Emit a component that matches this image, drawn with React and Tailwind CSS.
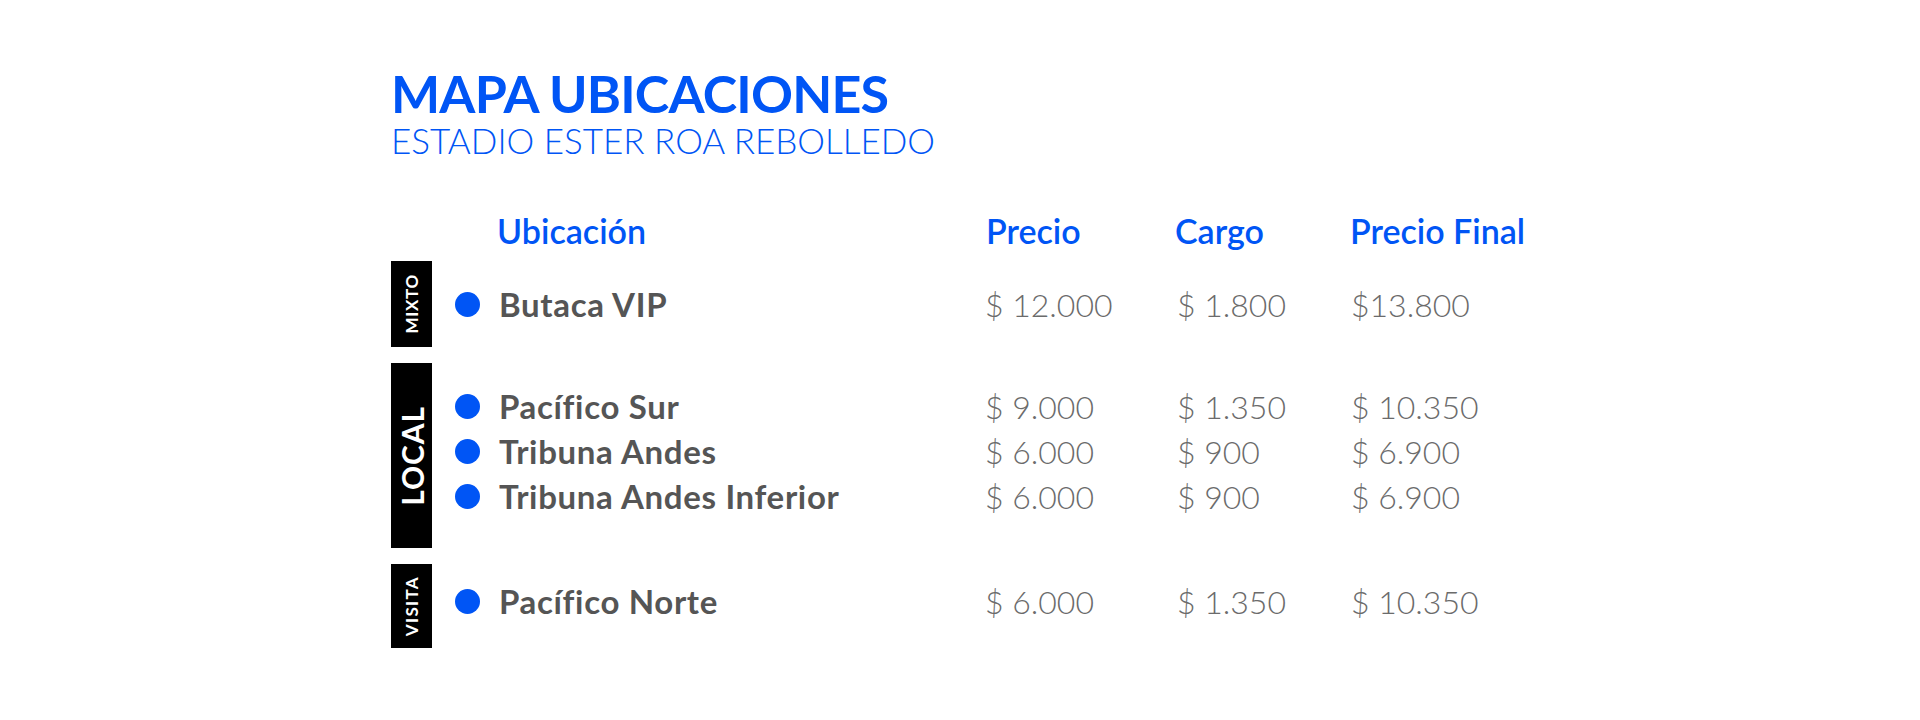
import React from 'react';

const groups = [
  {
    label: 'MIXTO',
    labelClass: 'text-[17px] tracking-[0.04em]',
    boxClass: 'h-[86px]',
    rowsClass: '',
    rows: [{ name: 'Butaca VIP', precio: '$ 12.000', cargo: '$ 1.800', total: '$13.800' }],
  },
  {
    label: 'LOCAL',
    labelClass: 'text-[30px] tracking-[0.03em]',
    boxClass: 'h-[185px]',
    rowsClass: 'mb-[8px]',
    rows: [
      { name: 'Pacífico Sur', precio: '$ 9.000', cargo: '$ 1.350', total: '$ 10.350' },
      { name: 'Tribuna Andes', precio: '$ 6.000', cargo: '$ 900', total: '$ 6.900' },
      { name: 'Tribuna Andes Inferior', precio: '$ 6.000', cargo: '$ 900', total: '$ 6.900' },
    ],
  },
  {
    label: 'VISITA',
    labelClass: 'text-[17px] tracking-[0.08em]',
    boxClass: 'h-[84px]',
    rowsClass: 'mb-[10px]',
    rows: [{ name: 'Pacífico Norte', precio: '$ 6.000', cargo: '$ 1.350', total: '$ 10.350' }],
  },
];

const cols = 'grid grid-cols-[486px_192px_174px_220px] items-center';

const App = () => {
  return (
    <div className="w-[1920px] h-[720px] bg-white pl-[391px] pt-[65px]" style={{ fontFamily: 'Lato, "Open Sans", sans-serif' }}>
      {/* Title */}
      <h1 className="text-[52px] leading-[56px] font-bold text-[#0055f5] tracking-[-0.015em]">MAPA UBICACIONES</h1>
      <p className="text-[35px] leading-[38px] font-light text-[#0055f5]">ESTADIO ESTER ROA REBOLLEDO</p>

      {/* Header */}
      <div className={`${cols} ml-[106px] mt-[52px] text-[34px] leading-[40px] font-semibold text-[#0055f5]`}>
        <span>Ubicación</span>
        <span className="pl-[3px]">Precio</span>
        <span>Cargo</span>
        <span className="pl-[1px]">Precio Final</span>
      </div>

      {/* Groups */}
      <div className="flex flex-col gap-[16px] mt-[10px]">
        {groups.map(g => (
          <div key={g.label} className="flex items-center">
            <div className={`w-[41px] ${g.boxClass} bg-black flex items-center justify-center`}>
              <span className={`[writing-mode:vertical-rl] rotate-180 text-white font-bold leading-none ${g.labelClass}`}>{g.label}</span>
            </div>
            <div className={`flex flex-col gap-[8px] ml-[23px] ${g.rowsClass}`}>
              {g.rows.map(r => (
                <div key={r.name} className="flex items-center">
                  <span className="w-[25px] h-[25px] rounded-full bg-[#0055f5] shrink-0" />
                  <div className={`${cols} ml-[19px] leading-[37px]`}>
                    <span className="text-[33px] font-bold text-[#555555] tracking-[0.02em]">{r.name}</span>
                    <span className="text-[32px] font-light text-[#6b6b6b]">{r.precio}</span>
                    <span className="text-[32px] font-light text-[#6b6b6b]">{r.cargo}</span>
                    <span className="text-[32px] font-light text-[#6b6b6b]">{r.total}</span>
                  </div>
                </div>
              ))}
            </div>
          </div>
        ))}
      </div>
    </div>
  );
};

export default App;
